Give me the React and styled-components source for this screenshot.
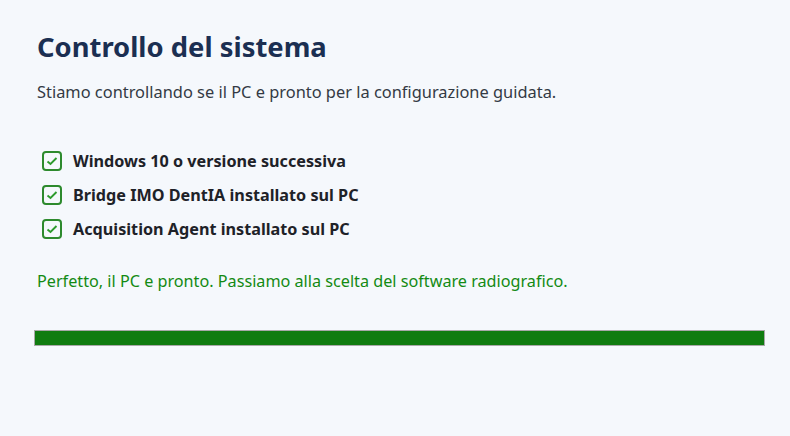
import React from 'react';
import styled, { createGlobalStyle } from 'styled-components';

const GlobalStyle = createGlobalStyle`
    html, body {
        margin: 0;
        padding: 0;
        background: #f5f8fc;
    }
    body {
        font-family: "Noto Sans", "Open Sans", sans-serif;
    }
`

const Page = styled.div`
    width: 790px;
    height: 436px;
    box-sizing: border-box;
    padding: 29px 25px 0 34px;
`

const Title = styled.h1`
    margin: 0 0 0 3px;
    font-size: 27.4px;
    line-height: 36px;
    font-weight: 700;
    color: #1b2f52;
`

const Subtitle = styled.p`
    margin: 16px 0 0 3px;
    font-size: 16.4px;
    line-height: 22px;
    color: #333a44;
`

const CheckList = styled.ul`
    list-style: none;
    margin: 47px 0 0 8px;
    padding: 0;
    display: flex;
    flex-direction: column;
    gap: 12px;
`

const CheckItem = styled.li`
    display: flex;
    align-items: center;
    gap: 11px;
    font-size: 16.2px;
    line-height: 22px;
    font-weight: 700;
    color: #1e2228;
`

const Box = styled.span`
    width: 20px;
    height: 20px;
    box-sizing: border-box;
    border: 2px solid #2d8a2d;
    border-radius: 4px;
    display: flex;
    align-items: center;
    justify-content: center;
    background: #f5f8fc;
`

const Status = styled.p`
    margin: 30px 0 0 3px;
    font-size: 16.2px;
    line-height: 22px;
    color: ${p => p.ok ? '#138a13' : '#b32020'};
`

const Bar = styled.div`
    margin-top: 38px;
    height: 16px;
    box-sizing: border-box;
    border: 1px solid #a8a8a8;
    background: #e6e6e6;
`

const Fill = styled.div`
    height: 100%;
    background: #107c10;
`

const checks = [
    'Windows 10 o versione successiva',
    'Bridge IMO DentIA installato sul PC',
    'Acquisition Agent installato sul PC',
];

const CheckIcon = () => (
    <svg width="12" height="10" viewBox="0 0 12 10">
        <path d="M1.5 5.5 L4.5 8 L10.5 2" fill="none" stroke="#2d9a2d" strokeWidth="1.9" />
    </svg>
);

const App = () => {
    const progress = 100;
    return (
        <Page>
            <GlobalStyle />
            <Title>Controllo del sistema</Title>
            <Subtitle>Stiamo controllando se il PC e pronto per la configurazione guidata.</Subtitle>
            <CheckList>
                {checks.map(c => (
                    <CheckItem key={c}>
                        <Box><CheckIcon /></Box>
                        {c}
                    </CheckItem>
                ))}
            </CheckList>
            <Status ok>Perfetto, il PC e pronto. Passiamo alla scelta del software radiografico.</Status>
            <Bar>
                <Fill style={{ width: `${progress}%` }} />
            </Bar>
        </Page>
    );
}

export default App;
